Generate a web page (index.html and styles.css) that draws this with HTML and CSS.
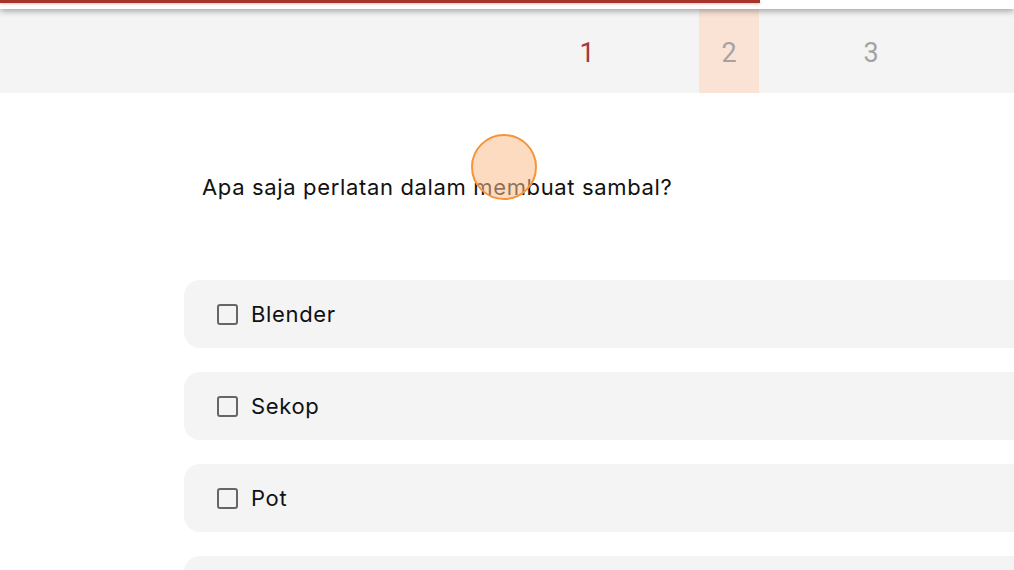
FILE: index.html
```html
<!DOCTYPE html>
<html lang="id">
<head>
<meta charset="utf-8">
<link rel="stylesheet" href="styles.css">
</head>
<body>
<header class="topbar">
  <div class="progress"></div>
</header>
<nav class="steps">
  <div class="step done">1</div>
  <div class="step current">2</div>
  <div class="step">3</div>
</nav>
<main class="content">
  <p class="question">Apa saja perlatan dalam membuat sambal?</p>
  <div class="options">
    <label class="option"><span class="box"></span><span class="label">Blender</span></label>
    <label class="option"><span class="box"></span><span class="label">Sekop</span></label>
    <label class="option"><span class="box"></span><span class="label">Pot</span></label>
    <div class="option"></div>
  </div>
  <div class="cursor"></div>
</main>
</body>
</html>
```
FILE: styles.css
```css
* { box-sizing: border-box; }
html, body { margin: 0; padding: 0; }
body {
  width: 1014px;
  height: 570px;
  overflow: hidden;
  background: #fff;
  font-family: Inter, "Noto Sans", sans-serif;
  color: #111;
  position: relative;
}
.topbar {
  height: 9px;
  background: #fff;
  position: relative;
  z-index: 2;
  box-shadow: 0 2px 6px rgba(0,0,0,0.35);
}
.progress {
  width: 760px;
  height: 3px;
  background: #a5342a;
  box-shadow: 0 1px 3px rgba(165,52,42,0.35);
}
.steps {
  height: 84px;
  background: #f4f4f4;
  display: flex;
  padding-left: 557px;
  gap: 82px;
}
.step {
  width: 60px;
  display: flex;
  align-items: center;
  justify-content: center;
  padding-top: 3px;
  font-size: 27px;
  color: #a3a3a3;
  font-family: Roboto, sans-serif;
  font-weight: 400;
}
.step.done { color: #a33a3c; }
.step.current { background: #fae3d5; }
.content {
  position: relative;
  padding-left: 184px;
}
.question {
  margin: 0;
  padding: 80px 0 0 18px;
  font-size: 22px;
  line-height: 28px;
  letter-spacing: 0.65px;
  height: 187px;
}
.options {
  display: flex;
  flex-direction: column;
  gap: 24px;
}
.option {
  display: flex;
  align-items: center;
  height: 68px;
  width: 900px;
  background: #f4f4f4;
  border-radius: 16px;
  padding-left: 33px;
}
.box {
  width: 21px;
  height: 21px;
  border: 2px solid #666;
  border-radius: 3px;
  margin-right: 13px;
}
.label { font-size: 22px; letter-spacing: 0.65px; }
.cursor {
  position: absolute;
  left: 471px;
  top: 41px;
  width: 66px;
  height: 66px;
  border-radius: 50%;
  border: 2px solid #f7943a;
  background: rgba(252, 190, 140, 0.55);
}
```
